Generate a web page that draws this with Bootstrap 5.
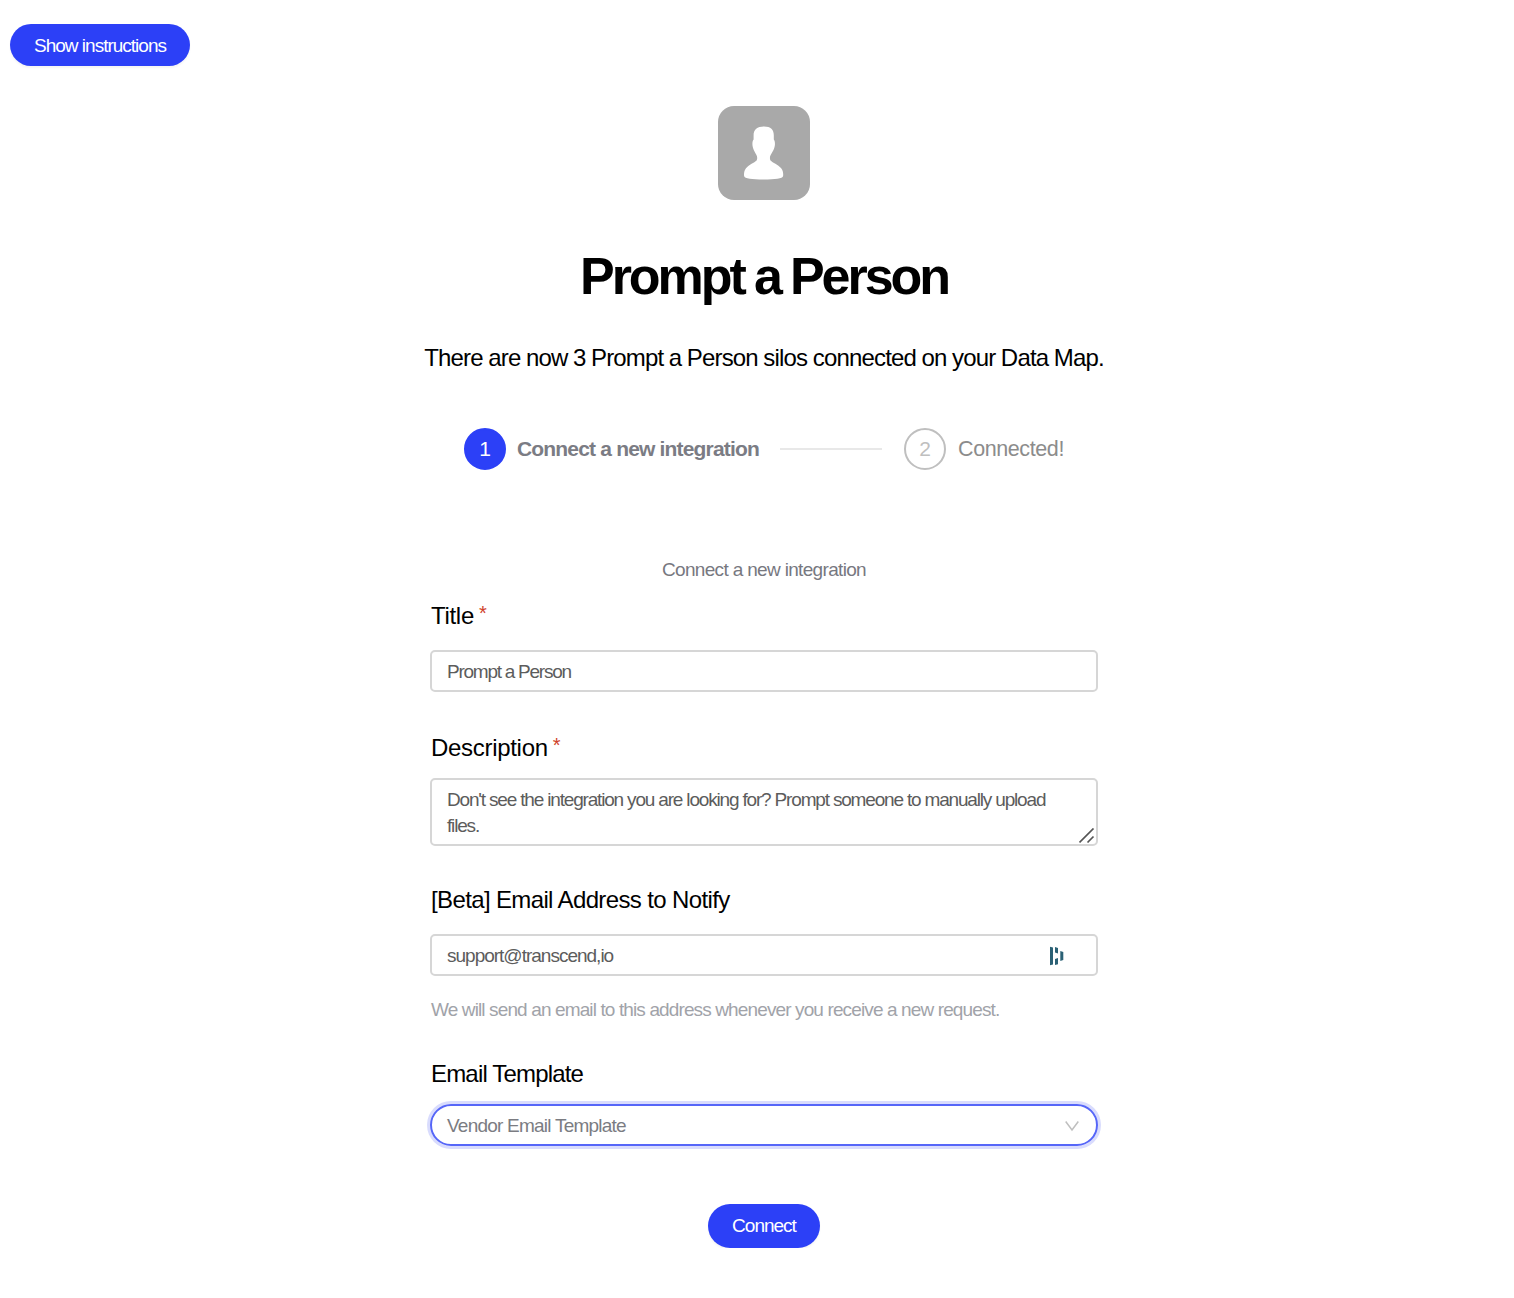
<!DOCTYPE html>
<html lang="en">

<head>
    <meta charset="UTF-8">
    <meta name="viewport" content="width=device-width, initial-scale=1">
    <title>Prompt a Person</title>
    <link href="https://cdn.jsdelivr.net/npm/bootstrap@5.3.0/dist/css/bootstrap.min.css" rel="stylesheet">
    <style>
        body {
            font-family: "Liberation Sans", Arial, sans-serif;
            font-size: 19px;
            line-height: 28px;
            color: #000;
            background: #fff;
            overflow: hidden;
        }

        .page {
            padding: 24px 0 0 14px;
        }

        .btn-brand {
            --bs-btn-color: #fff;
            --bs-btn-bg: #2c40f7;
            --bs-btn-hover-color: #fff;
            --bs-btn-hover-bg: #2033d8;
            --bs-btn-border-width: 0;
            --bs-btn-font-size: 19px;
            --bs-btn-padding-x: 0;
            --bs-btn-padding-y: 0;
            --bs-btn-line-height: 42px;
            --bs-btn-border-radius: 22px;
            box-shadow: 0 2px 2px rgba(0, 0, 0, .045);
        }

        .btn-instructions {
            --bs-btn-line-height: 43px;
            width: 180px;
            height: 42px;
            margin-left: -4px;
            letter-spacing: -1px;
        }

        .btn-connect {
            width: 112px;
            height: 44px;
            margin-top: 58px;
            letter-spacing: -1px;
        }

        .avatar {
            width: 92px;
            height: 94px;
            margin-top: 40px;
            border-radius: 16px;
            background: #a9a9a9;
        }

        h1 {
            margin: 40px 0 0;
            font-size: 52px;
            line-height: 72px;
            font-weight: 700;
            letter-spacing: -3.05px;
            word-spacing: -1.2px;
        }

        .intro {
            margin: 28px 0 0;
            font-size: 24px;
            line-height: 36px;
            letter-spacing: -.83px;
            word-spacing: -.35px;
        }

        .steps {
            width: 600px;
            margin-top: 52px;
            font-size: 21px;
            line-height: 42px;
        }

        .step-number {
            width: 42px;
            height: 42px;
            border: 2px solid #bfbfbf;
            color: #bfbfbf;
            flex: none;
        }

        .step-number.current {
            border-color: #2c40f7;
            background: #2c40f7;
            color: #fff;
        }

        .step-name {
            margin-left: 12px;
            color: #8c8c8c;
            font-size: 21.5px;
            letter-spacing: -.4px;
            white-space: nowrap;
        }

        .step-name.current {
            width: 242px;
            margin-left: 11px;
            color: #7b7c84;
            font-size: 21px;
            font-weight: 700;
            letter-spacing: -.82px;
        }

        .step-line {
            width: 102px;
            height: 2px;
            margin: 0 22px 0 21px;
            background: #e8e8e8;
        }

        .form-heading {
            margin: 86px 0 0;
            color: #77787f;
            letter-spacing: -.67px;
        }

        form {
            width: 668px;
            margin-top: 14px;
        }

        .form-label {
            display: block;
            margin: 0 0 16px 1px;
            font-size: 24px;
            line-height: 36px;
            letter-spacing: -.3px;
        }

        .form-label.tight {
            margin-bottom: 12px;
        }

        .label-email {
            letter-spacing: -.63px;
        }

        .label-template {
            letter-spacing: -.82px;
        }

        .required {
            margin-left: 5px;
            color: #cf3f2a;
            font-size: 20px;
            line-height: 1;
            vertical-align: 4px;
        }

        .form-control,
        .form-control:focus {
            height: 42px;
            padding: 7px 15px 5px;
            border: 2px solid #d6d6d6;
            border-radius: 5px;
            color: #5c5c5c;
            font-size: 19px;
            line-height: 26px;
            letter-spacing: -1px;
        }

        #title {
            letter-spacing: -1.25px;
        }

        #description {
            display: block;
            height: 68px;
            min-height: 0;
            resize: none;
            overflow: hidden;
            letter-spacing: -1.175px;
        }

        .grip {
            right: 3px;
            bottom: 2px;
        }

        .autofill {
            right: 34px;
            top: 12px;
        }

        .hint {
            margin: 20px 0 32px 1px;
            color: #a1a3a9;
            letter-spacing: -.875px;
        }

        .template-select {
            height: 42px;
            padding: 2px 17px 0 15px;
            border: 2px solid #5666f8;
            border-radius: 21px;
            box-shadow: 0 0 0 3px #d9dcfd;
            color: #7b7c82;
            letter-spacing: -.77px;
        }

        .field-title {
            margin-bottom: 38px;
        }

        .field-description {
            margin-bottom: 36px;
        }
    </style>
</head>

<body>
    <div class="page">
        <button type="button" class="btn btn-brand btn-instructions d-block">Show instructions</button>

        <main class="d-flex flex-column align-items-center">
            <!-- Silo icon -->
            <div class="avatar">
                <svg class="d-block" width="92" height="94" viewBox="0 0 92 94" fill="#fff">
                    <path d="M46 20.500c6.800 0 9.800 3.200 9.800 8.700v4.300c1.500 1.500 1.500 6.500.2 9.300-.8 1.900-1.700 3.700-3.200 6-1.100 1.700-1.200 4-.3 5.600 2.200 2.400 7.500 4 10.700 7.800 1.900 2.300 2.200 5.500 1.900 7.800-.5 2.600-8 3.500-19.500 3.500s-19-.9-19.500-3.500c-.3-2.300 0-5.500 1.900-7.800 3.200-3.800 8.200-5.400 10.600-7.800.9-1.600.8-3.900-.3-5.600-1.500-2.300-2.200-4.100-3-6-1.200-2.800-1.300-7.800.3-9.300v-4.300c0-5.500 3.600-8.700 10.400-8.700z" />
                </svg>
            </div>

            <h1>Prompt a Person</h1>
            <p class="intro">There are now 3 Prompt a Person silos connected on your Data Map.</p>

            <!-- Steps -->
            <div class="steps d-flex align-items-center">
                <span class="step-number current rounded-circle d-flex align-items-center justify-content-center">1</span>
                <span class="step-name current">Connect a new integration</span>
                <span class="step-line"></span>
                <span class="step-number rounded-circle d-flex align-items-center justify-content-center">2</span>
                <span class="step-name">Connected!</span>
            </div>

            <p class="form-heading">Connect a new integration</p>

            <form>
                <div class="field-title">
                    <label class="form-label" for="title">Title<span class="required">*</span></label>
                    <input type="text" class="form-control" id="title" value="Prompt a Person">
                </div>

                <div class="field-description">
                    <label class="form-label tight" for="description">Description<span class="required">*</span></label>
                    <div class="position-relative">
                        <textarea class="form-control" id="description" spellcheck="false">Don't see the integration you are looking for? Prompt someone to manually upload
files.</textarea>
                        <svg class="grip position-absolute" width="16" height="16" viewBox="0 0 16 16" fill="none" stroke="#555" stroke-width="1.7">
                            <path d="M.5 14.500l14-14M8.500 14.500l6-6" />
                        </svg>
                    </div>
                </div>

                <div>
                    <label class="form-label label-email" for="email">[Beta] Email Address to Notify</label>
                    <div class="position-relative">
                        <input type="text" class="form-control" id="email" value="support@transcend,io">
                        <!-- Password manager badge -->
                        <svg class="autofill position-absolute d-block" width="14" height="20" viewBox="0 0 14 20" fill="#2b6175">
                            <path d="M0 .7l3 .8v17l-3 .8zM5 1l3 1v5.500l-3-1zM5 13l3-1v6.300l-3 .7zM10.300 5l3 1v8l-3 1z" />
                        </svg>
                    </div>
                    <p class="hint">We will send an email to this address whenever you receive a new request.</p>
                </div>

                <label class="form-label tight label-template">Email Template</label>
                <div class="template-select d-flex align-items-center justify-content-between" role="combobox" tabindex="0">
                    <span>Vendor Email Template</span>
                    <svg width="14" height="12" viewBox="0 0 14 12" fill="none" stroke="#bfbfbf" stroke-width="1.5">
                        <path d="M.7 1.500L7 10l6.300-8.500" />
                    </svg>
                </div>
            </form>

            <button type="button" class="btn btn-brand btn-connect">Connect</button>
        </main>
    </div>

    <script src="https://cdn.jsdelivr.net/npm/bootstrap@5.3.0/dist/js/bootstrap.bundle.min.js"></script>
</body>

</html>
